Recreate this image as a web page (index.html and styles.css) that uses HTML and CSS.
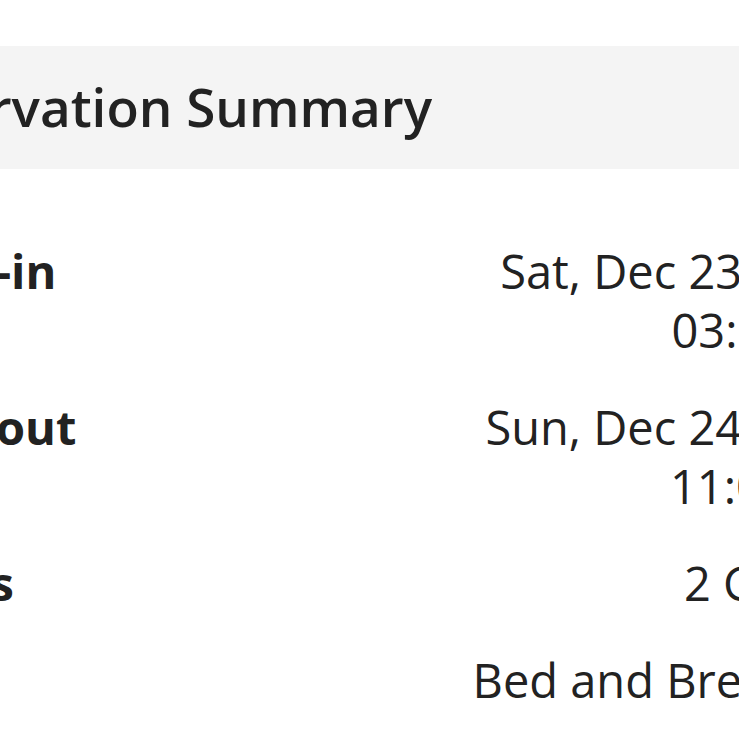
FILE: index.html
```html
<!DOCTYPE html>
<html lang="en">
<head>
  <meta charset="UTF-8" />
  <meta name="viewport" content="width=device-width, initial-scale=1.0" />
  <title>Reservation Summary</title>
  <link rel="stylesheet" href="styles.css">
</head>
<body>
  <div class="sheet">
    <h2 class="summary-title">Reservation Summary</h2>

    <div class="rows">
      <div class="row">
        <span class="label">Check-in</span>
        <div class="value">
          <span>Sat, Dec 23, 2023</span>
          <span>03:00 PM</span>
        </div>
      </div>
      <div class="row">
        <span class="label">Checkout</span>
        <div class="value">
          <span>Sun, Dec 24, 2023</span>
          <span>11:00 AM</span>
        </div>
      </div>
      <div class="row">
        <span class="label">Guests</span>
        <div class="value">
          <span>2 Guests</span>
        </div>
      </div>
      <div class="row">
        <span class="label">Room</span>
        <div class="value">
          <span>Bed and Breakfast</span>
        </div>
      </div>
    </div>
  </div>
</body>
</html>
```

FILE: styles.css
```css
body {
  margin: 0;
  background: #fff;
  color: #222;
  font-family: 'Open Sans', 'Noto Sans', sans-serif;
  overflow: hidden;
}
.sheet {
  margin: 46px -172px 0;
}
.summary-title {
  margin: 0;
  background: #f4f4f4;
  padding: 24px 40px 26px;
  font-size: 53px;
  font-weight: 600;
  line-height: normal;
}
.rows {
  padding: 54px 37px 0 26px;
}
.row {
  display: flex;
  justify-content: space-between;
  align-items: flex-start;
  padding: 19px 0;
  font-size: 47px;
  line-height: 59px;
}
.label {
  font-weight: 700;
}
.value {
  text-align: right;
}
.value span {
  display: block;
}
```
